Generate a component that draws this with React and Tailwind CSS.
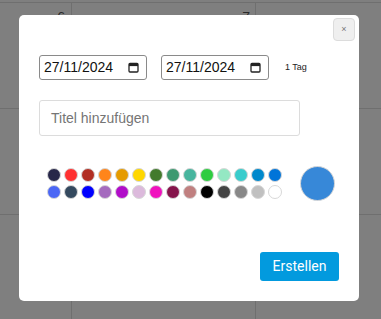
import React from "react";

const row1 = ["#272749","#ff3131","#b22f24","#ff851b","#e59b00","#ffd700","#437a2c","#3d9970","#48b59e","#2ecc40","#94e8c3","#39cccc","#0088cc","#0074d9"];
const row2 = ["#4b67f5","#34495e","#0000ff","#a56bbe","#b10dc9","#dcbadc","#f012be","#85144b","#c08080","#000000","#444444","#888888","#c0c0c0","#ffffff"];

function CalIcon() {
  return (
    <svg width="11" height="11" viewBox="0 0 11 11" className="shrink-0">
      <rect x="1" y="1.5" width="9" height="8.5" rx="1" fill="none" stroke="#222" strokeWidth="1.3" />
      <rect x="1" y="1.5" width="9" height="2.6" fill="#222" />
    </svg>
  );
}

function DateBox() {
  return (
    <div className="flex h-[25px] w-[108px] items-center justify-between rounded-[3px] border border-[#8a8a8a] pl-[4px] pr-[7px] text-[14px] text-[#111]">
      <span>27/11/2024</span>
      <CalIcon />
    </div>
  );
}

export default function App() {
  return (
    <div className="relative h-[319px] w-[381px] overflow-hidden bg-white font-['Liberation_Sans',Arial,sans-serif]">
      {/* calendar behind */}
      <div className="grid h-full w-full grid-cols-[72px_184px_1fr] grid-rows-[3px_106px_106px_1fr]">
        <div className="col-span-3 border-b border-[#dedede]" />
        <div className="border-b border-r border-[#dedede] pr-[6px] pt-[4px] text-right text-[14px] text-[#555]">6</div>
        <div className="border-b border-r border-[#dedede] pr-[5px] pt-[4px] text-right text-[14px] text-[#555]">7</div>
        <div className="border-b border-[#dedede]" />
        <div className="border-b border-r border-[#dedede]" />
        <div className="border-b border-r border-[#dedede]" />
        <div className="border-b border-[#dedede]" />
        <div className="border-r border-[#dedede]" />
        <div className="border-r border-[#dedede]" />
        <div />
      </div>
      {/* overlay */}
      <div className="absolute inset-0 bg-black/50" />
      {/* modal */}
      <div className="absolute left-[19px] top-[15px] flex h-[286px] w-[340px] flex-col rounded-[5px] bg-white">
        <div className="flex justify-end pr-[4px] pt-[3px]">
          <div className="flex h-[23px] w-[22px] items-center justify-center rounded-[4px] border border-[#dcdcdc] bg-[#efefef] text-[9px] leading-none text-[#777]">×</div>
        </div>
        <div className="flex flex-1 flex-col px-[20px]">
          <div className="mt-[14px] flex items-center">
            <DateBox />
            <div className="ml-[14px]"><DateBox /></div>
            <span className="ml-[16px] text-[9px] text-[#222]">1 Tag</span>
          </div>
          <div className="mt-[20px] flex h-[36px] w-[261px] items-center rounded-[3px] border border-[#dcdcdc] pl-[11px] text-[14px] text-[#757575]">
            Titel hinzufügen
          </div>
          <div className="mt-[30px] flex items-center">
            <div className="ml-[8px] flex flex-col gap-[3px]">
              {[row1, row2].map((row, i) => (
                <div key={i} className="flex gap-[3px]">
                  {row.map((c) => (
                    <div key={c} className="h-[14px] w-[14px] rounded-full border border-[#d8d8d8]" style={{ backgroundColor: c }} />
                  ))}
                </div>
              ))}
            </div>
            <div className="ml-[18px] h-[35px] w-[35px] rounded-full border border-[#d8d8d8] bg-[#3788d8]" />
          </div>
          <div className="mt-auto mb-[20px] flex justify-end">
            <div className="flex h-[29px] w-[79px] items-center justify-center rounded-[3px] bg-[#029ade] font-['Roboto',sans-serif] text-[14px] text-white">
              Erstellen
            </div>
          </div>
        </div>
      </div>
    </div>
  );
}
